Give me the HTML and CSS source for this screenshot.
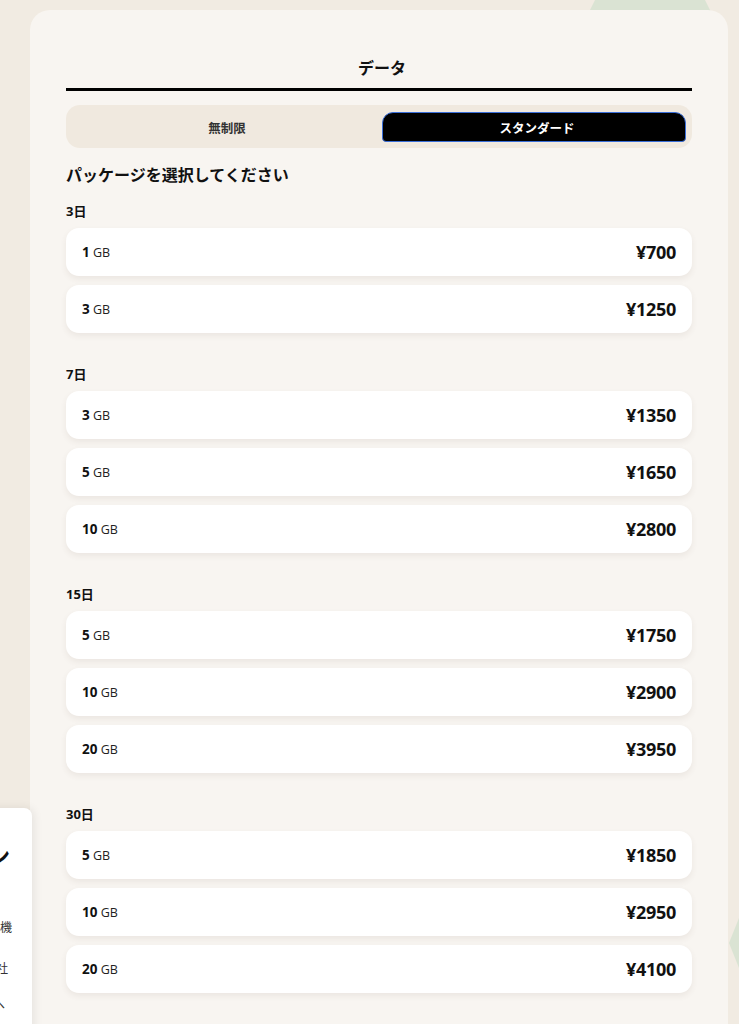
FILE: index.html
```html
<!DOCTYPE html>
<html lang="ja">
<head>
<meta charset="utf-8">
<title>データ</title>
<link rel="stylesheet" href="styles.css">
</head>
<body>
<svg class="deco deco-top" width="160" height="60" viewBox="0 0 160 60"><polygon points="40,-30 120,-30 150,30 120,90 40,90 10,30" fill="#dae3d3"/></svg>
<svg class="deco deco-right" width="40" height="100" viewBox="0 0 40 100"><polygon points="20,0 60,0 80,50 60,100 20,100 0,50" fill="#dae3d3"/></svg>

<main class="panel">
  <h1 class="title">データ</h1>
  <div class="tabs">
    <button class="tab">無制限</button>
    <button class="tab active">スタンダード</button>
  </div>
  <h2 class="prompt">パッケージを選択してください</h2>

  <section class="group">
    <h3 class="days">3日</h3>
    <div class="row"><span class="size"><b>1</b> GB</span><span class="price">¥700</span></div>
    <div class="row"><span class="size"><b>3</b> GB</span><span class="price">¥1250</span></div>
  </section>

  <section class="group">
    <h3 class="days">7日</h3>
    <div class="row"><span class="size"><b>3</b> GB</span><span class="price">¥1350</span></div>
    <div class="row"><span class="size"><b>5</b> GB</span><span class="price">¥1650</span></div>
    <div class="row"><span class="size"><b>10</b> GB</span><span class="price">¥2800</span></div>
  </section>

  <section class="group">
    <h3 class="days">15日</h3>
    <div class="row"><span class="size"><b>5</b> GB</span><span class="price">¥1750</span></div>
    <div class="row"><span class="size"><b>10</b> GB</span><span class="price">¥2900</span></div>
    <div class="row"><span class="size"><b>20</b> GB</span><span class="price">¥3950</span></div>
  </section>

  <section class="group">
    <h3 class="days">30日</h3>
    <div class="row"><span class="size"><b>5</b> GB</span><span class="price">¥1850</span></div>
    <div class="row"><span class="size"><b>10</b> GB</span><span class="price">¥2950</span></div>
    <div class="row"><span class="size"><b>20</b> GB</span><span class="price">¥4100</span></div>
  </section>
</main>

<aside class="side-card">
  <p class="side-head">データプラン</p>
  <p class="side-line l1">ご利用の端末がeSIM対応機</p>
  <p class="side-line l2">ご購入後、メールにて当社</p>
  <p class="side-line l3">お届けします。</p>
  <p class="side-line l4">詳しくはサポートへ</p>
</aside>
</body>
</html>
```

FILE: styles.css
```css
* { box-sizing: border-box; }
html, body { margin: 0; padding: 0; }
body {
  background: #f1ebe2;
  font-family: "Open Sans", "Noto Sans CJK JP", sans-serif;
  color: #111;
  position: relative;
  height: 1024px;
  overflow: hidden;
}
.deco { position: absolute; z-index: 0; }
.deco-top { left: 570px; top: 0; }
.deco-right { left: 729px; top: 893px; }

.panel {
  position: relative;
  z-index: 1;
  margin: 10px 11px 0 30px;
  background: #f8f5f1;
  border-radius: 20px;
  padding: 46px 36px 40px;
  min-height: 1100px;
}
.title {
  margin: 0;
  font-size: 16px;
  line-height: 24px;
  font-weight: 700;
  text-align: center;
  padding: 0 0 8px 6px;
  border-bottom: 3px solid #000;
}
.tabs {
  margin-top: 14px;
  height: 43px;
  background: #f0e9df;
  border-radius: 14px;
  padding: 7px 6px 6px 6px;
  display: grid;
  grid-template-columns: 1fr 1fr;
  gap: 6px;
}
.tab {
  border: 1px solid transparent;
  background: transparent;
  font-family: inherit;
  font-size: 12.5px;
  font-weight: 700;
  color: #333;
  border-radius: 11px 11px 4px 4px;
  padding: 0 0 0 6px;
}
.tab.active {
  background: #000;
  color: #fff;
  border-color: #3a6ed8;
}
.prompt {
  margin: 15px 0 0;
  font-size: 16px;
  line-height: 24px;
  font-weight: 700;
}
.group { display: flex; flex-direction: column; gap: 9px; margin-top: 31px; }
.prompt + .group { margin-top: 14px; }
.days {
  margin: 0 0 -2px;
  font-size: 13px;
  line-height: 20px;
  font-weight: 700;
}
.row {
  height: 48px;
  background: #fff;
  border-radius: 13px;
  box-shadow: 0 3px 6px rgba(90, 70, 50, 0.08);
  display: flex;
  align-items: center;
  justify-content: space-between;
  padding: 0 16px;
}
.size { font-size: 12.5px; color: #222; }
.size b { font-size: 13.5px; font-weight: 700; color: #111; }
.price { font-size: 18px; font-weight: 700; color: #111; letter-spacing: -0.3px; }

.side-card {
  position: absolute;
  z-index: 2;
  left: -300px;
  top: 808px;
  width: 332px;
  height: 260px;
  background: #fff;
  border-radius: 8px;
  box-shadow: 2px 0 10px rgba(0, 0, 0, 0.08);
  padding: 32px 0 0 0;
  text-align: right;
}
.side-card p { margin: 0; white-space: nowrap; }
.side-head { font-size: 22px; font-weight: 700; line-height: 30px; padding-right: 22px; }
.side-line { font-size: 12px; line-height: 18px; color: #333; }
.l1 { margin-top: 49px !important; padding-right: 20px; }
.l2 { margin-top: 23px !important; padding-right: 24px; }
.l3 { padding-right: 26px; }
.l4 { padding-right: 27px; }
```
